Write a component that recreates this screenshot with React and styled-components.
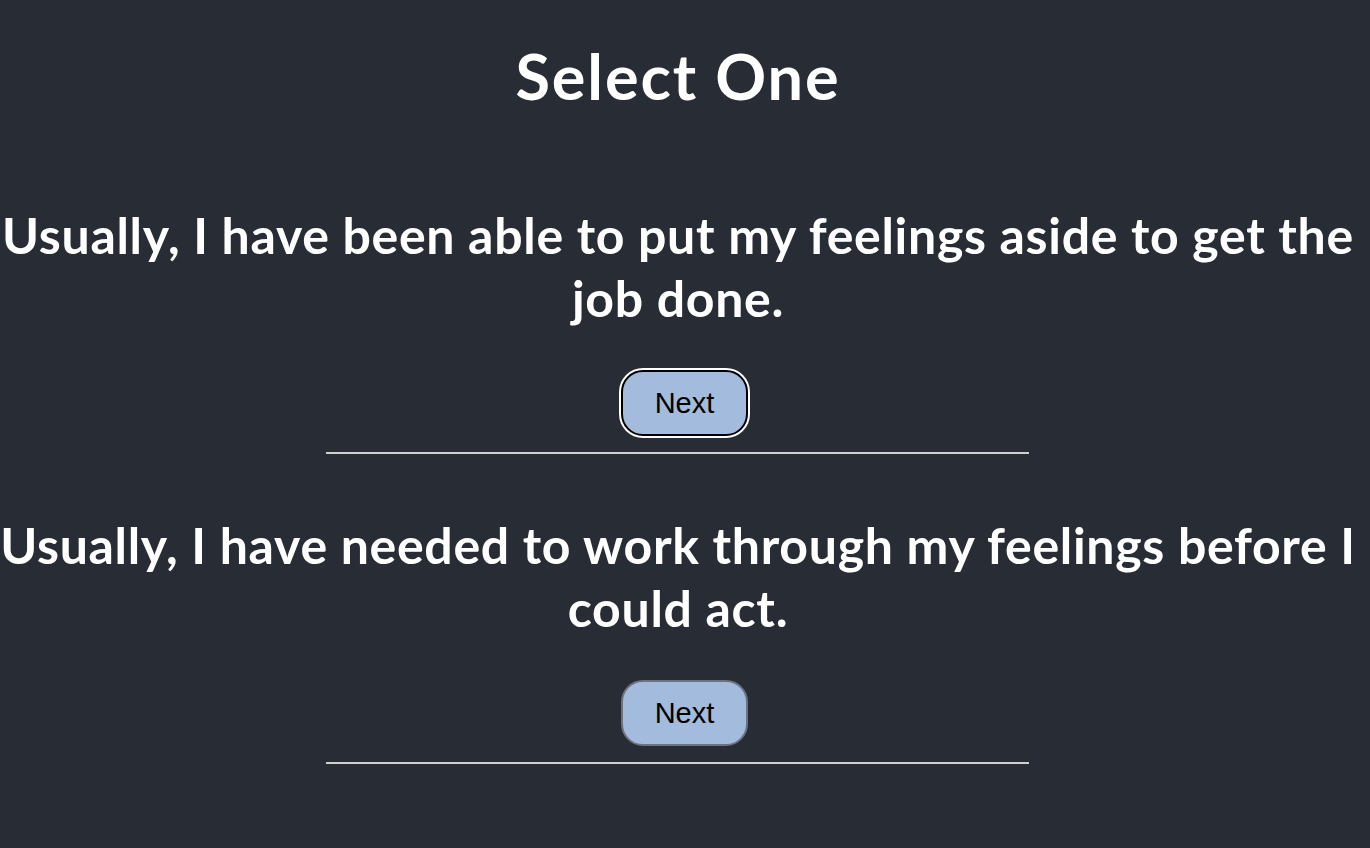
import React from "react";
import styled, { createGlobalStyle } from "styled-components";

const Global = createGlobalStyle`
  html, body { margin: 0; padding: 0; background: #282c34; }
  body { font-family: Lato, "Open Sans", sans-serif; color: #ffffff; }
`;

const Page = styled.div`
  min-height: 848px;
  background: #282c34;
  display: flex;
  flex-direction: column;
  align-items: center;
  padding: 38px 14px 0 0;
  box-sizing: border-box;
`;

const Title = styled.h1`
  margin: 0 0 90px;
  font-size: 63px;
  line-height: 76px;
  font-weight: 700;
  letter-spacing: 1.9px;
  text-align: center;
`;

const Option = styled.section`
  width: 100%;
  display: flex;
  flex-direction: column;
  align-items: center;
  margin-bottom: 60px;
`;

const Question = styled.h2`
  margin: 0;
  font-size: 50px;
  line-height: 63px;
  font-weight: 700;
  letter-spacing: 0.7px;
  text-align: center;
`;

const NextButton = styled.button`
  margin: 40px 0 0 13px;
  width: 127px;
  height: 66px;
  border-radius: 22px;
  background: #a3bbdd;
  color: #000;
  font-family: "Liberation Sans", Arial, sans-serif;
  font-size: 29px;
  border: 2px solid ${(p) => (p.$focused ? "#000" : "#6b7280")};
  box-shadow: ${(p) => (p.$focused ? "0 0 0 2px #fff" : "none")};
  cursor: pointer;
`;

const Rule = styled.hr`
  width: 703px;
  margin: 16px 0 0 -2px;
  border: none;
  border-top: 2px solid #d0d0d0;
`;

const questions = [
  "Usually, I have been able to put my feelings aside to get the job done.",
  "Usually, I have needed to work through my feelings before I could act.",
];

export default function App() {
  return (
    <>
      <Global />
      <Page>
        <Title>Select One</Title>
        {questions.map((q, i) => (
          <Option key={i}>
            <Question>{q}</Question>
            <NextButton $focused={i === 0}>Next</NextButton>
            <Rule />
          </Option>
        ))}
      </Page>
    </>
  );
}
